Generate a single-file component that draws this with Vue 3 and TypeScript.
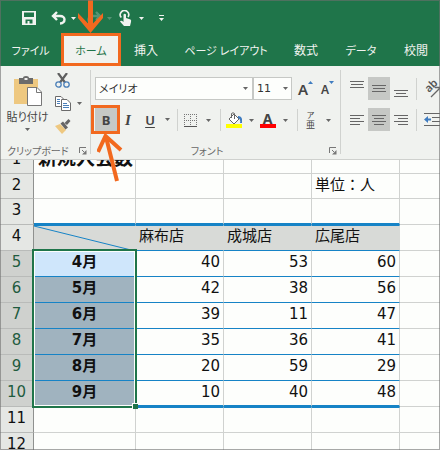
<script setup lang="ts">
import { ref } from 'vue'

interface Row {
  n: number
  label?: string
  cells: (string | number)[]
}

const tabs = ['ファイル', 'ホーム', '挿入', 'ページ レイアウト', '数式', 'データ', '校閲']
const activeTab = ref('ホーム')
const fontName = ref('メイリオ')
const fontSize = ref('11')

const rows: Row[] = [
  { n: 1, label: '新規入会数', cells: ['', '', ''] },
  { n: 2, cells: ['', '', '単位：人'] },
  { n: 3, cells: ['', '', ''] },
  { n: 4, cells: ['麻布店', '成城店', '広尾店'] },
  { n: 5, label: '4月', cells: [40, 53, 60] },
  { n: 6, label: '5月', cells: [42, 38, 56] },
  { n: 7, label: '6月', cells: [39, 11, 47] },
  { n: 8, label: '7月', cells: [35, 36, 41] },
  { n: 9, label: '8月', cells: [20, 59, 29] },
  { n: 10, label: '9月', cells: [10, 40, 48] },
  { n: 11, cells: ['', '', ''] },
  { n: 12, cells: ['', '', ''] },
]

const selected = (n: number) => n >= 5 && n <= 10
const isKana = (text: string) => /^[ァ-ー ]+$/.test(text)
</script>

<template>
  <div class="window">
    <header class="top">
      <div class="quick">
        <button class="q save" aria-label="上書き保存">
          <svg width="14" height="14" viewBox="0 0 14 14"><path d="M0 0H14V14H0Z M2 1.500V6H12V1.500Z M3.500 8.500V12.500H5.500V10H7.500V12.500H10.500V8.500Z" fill="#f1f3f0" fill-rule="evenodd" /></svg>
        </button>
        <button class="q undo" aria-label="元に戻す">
          <svg width="15" height="14" viewBox="0 0 15 14"><path d="M6 1L2 5L6 9M2 5H9C15 5 15 12 9 12.500" fill="none" stroke="#f1f3f0" stroke-width="2.400" /></svg>
          <svg class="caret" width="5" height="3" viewBox="0 0 5 3"><path d="M0 0H5L2.500 3Z" /></svg>
        </button>
        <button class="q redo" aria-label="やり直し">
          <svg width="15" height="14" viewBox="0 0 15 14"><path d="M9 1L13 5L9 9M13 5H6C0 5 0 12 6 12.500" fill="none" stroke="#f1f3f0" stroke-width="2.400" /></svg>
          <svg class="caret" width="5" height="3" viewBox="0 0 5 3"><path d="M0 0H5L2.500 3Z" /></svg>
        </button>
        <button class="q touch" aria-label="タッチ/マウス モードの切り替え">
          <svg width="13" height="17" viewBox="0 0 13 17"><path d="M2.300 7.500A4.200 4.200 0 1 1 9 7" fill="none" stroke="#f1f3f0" stroke-width="1.600" /><path d="M4.500 4.500Q5.700 3 7 4.500V8L11.500 9.500Q12.500 10 12 12L11 16H5L1 11.500Q2 10 4.500 12Z" fill="#f1f3f0" /></svg>
          <svg class="caret" width="5" height="3" viewBox="0 0 5 3"><path d="M0 0H5L2.500 3Z" /></svg>
        </button>
        <button class="q" aria-label="クイック アクセス ツール バーのユーザー設定">
          <svg width="5" height="7" viewBox="0 0 5 7"><path d="M0 0H5V1H0ZM0 3H5L2.500 6Z" fill="#f1f3f0" /></svg>
        </button>
      </div>
      <nav class="tabs">
        <button v-for="t in tabs" :key="t" class="tab" :class="{ active: t === activeTab, kana: isKana(t) }" @click="activeTab = t">{{ t }}</button>
      </nav>
    </header>

    <section class="ribbon">
      <div class="group clipboard">
        <div class="clip-body">
          <button class="paste">
            <svg width="28" height="30" viewBox="0 0 28 30">
              <rect y="3" width="24" height="25" fill="#eec880" />
              <path d="M5 2H9Q9 0 12 0T15 2H19V8H5Z" fill="#6b6b6b" /><rect x="10.500" y="2" width="3" height="2" fill="#f0f0ee" />
              <path d="M13.500 11.500H23L27.500 16V29.500H13.500Z" fill="#fff" stroke="#777" /><path d="M22.500 11.500V16.500H27.500" fill="none" stroke="#777" />
            </svg>
            <span>貼り付け</span>
            <svg class="caret" width="5" height="3" viewBox="0 0 5 3"><path d="M0 0H5L2.500 3Z" /></svg>
          </button>
          <div class="clip-tools">
            <button class="ic" aria-label="切り取り">
              <svg width="15" height="15" viewBox="0 0 15 15"><path d="M3 0L10 9.500M12 0L5 9.500" stroke="#5f5f5f" stroke-width="2.200" /><g fill="none" stroke="#4a7fb8" stroke-width="1.300"><circle cx="3.500" cy="11.500" r="2.700" /><circle cx="11.500" cy="11.500" r="2.700" /></g></svg>
            </button>
            <button class="ic copy" aria-label="コピー">
              <svg width="16" height="15" viewBox="0 0 16 15"><g fill="#fff" stroke="#6b6b6b"><path d="M.5.5H6L8.500 3V10.500H.5Z" /><path d="M6.500 3.500H12L15.500 7V14.500H6.500Z" /></g><path d="M2 3.500H5M2 5.500H5M2 7.500H5M8 7.500H12M8 9.500H14M8 11.500H14" stroke="#4a7fb8" /></svg>
              <svg class="caret" width="5" height="3" viewBox="0 0 5 3"><path d="M0 0H5L2.500 3Z" /></svg>
            </button>
            <button class="ic" aria-label="書式のコピー/貼り付け">
              <svg width="16" height="15" viewBox="0 0 16 15"><path d="M0 7L5 5L11 11L7 15Z" fill="#eec880" /><path d="M5.500 4.500L8 2.500L13 8.500L10.500 10.500ZM9.500 4L13.500 0L15.500 2L12 6Z" fill="#666" /></svg>
            </button>
          </div>
        </div>
        <footer><span>クリップボード</span>
          <button class="launch" aria-label="クリップボードの詳細"><svg width="8" height="8" viewBox="0 0 8 8"><path d="M.5 6V.5H7M3 3L5 5" fill="none" stroke="#777" /><path d="M7.500 3V7.500H3Z" fill="#777" /></svg></button>
        </footer>
      </div>

      <div class="group font">
        <div class="line">
          <span class="select name"><select v-model="fontName" aria-label="フォント名"><option>メイリオ</option></select><svg class="caret" width="5" height="3" viewBox="0 0 5 3"><path d="M0 0H5L2.500 3Z" /></svg></span>
          <span class="select size"><select v-model="fontSize" aria-label="フォント サイズ"><option>11</option></select><svg class="caret" width="5" height="3" viewBox="0 0 5 3"><path d="M0 0H5L2.500 3Z" /></svg></span>
          <button class="grow" aria-label="フォント サイズの拡大"><span>A</span><svg width="5" height="3" viewBox="0 0 5 3"><path d="M0 3H5L2.500 0Z" fill="#3f7cc0" /></svg></button>
          <button class="grow small" aria-label="フォント サイズの縮小"><span>A</span><svg width="5" height="3" viewBox="0 0 5 3"><path d="M0 0H5L2.500 3Z" fill="#3f7cc0" /></svg></button>
        </div>
        <div class="line">
          <button class="letter bold" aria-label="太字">B</button>
          <button class="letter italic" aria-label="斜体">I</button>
          <button class="letter under" aria-label="下線">U</button>
          <button class="drop" aria-label="下線の種類"><svg class="caret" width="5" height="3" viewBox="0 0 5 3"><path d="M0 0H5L2.500 3Z" /></svg></button>
          <i class="sep"></i>
          <button class="tool" aria-label="罫線">
            <svg width="16" height="16" viewBox="0 0 16 16"><path d="M1 2.500H15M1 8.500H15M1.500 2V14M7.500 2V14M13.500 2V14" stroke="#777" stroke-dasharray="1 1" /><path d="M1 14.500H14" stroke="#555" /></svg>
            <svg class="caret" width="5" height="3" viewBox="0 0 5 3"><path d="M0 0H5L2.500 3Z" /></svg>
          </button>
          <i class="sep"></i>
          <button class="tool" aria-label="塗りつぶしの色">
            <svg width="16" height="16" viewBox="0 0 16 16"><path d="M3 7L8 2L13 7L8 12Z" fill="#fff" stroke="#666" /><path d="M5.500 6V1.500Q7 0 8.500 1.500V7" fill="none" stroke="#666" /><path d="M12 4Q17 4 16 11H14Q15 7 12 6Z" fill="#3f7cc0" /><path d="M0 12H16V16H0Z" fill="#ff0" /></svg>
            <svg class="caret" width="5" height="3" viewBox="0 0 5 3"><path d="M0 0H5L2.500 3Z" /></svg>
          </button>
          <button class="tool" aria-label="フォントの色">
            <span class="color-a">A</span>
            <svg class="caret" width="5" height="3" viewBox="0 0 5 3"><path d="M0 0H5L2.500 3Z" /></svg>
          </button>
          <i class="sep"></i>
          <button class="tool ruby" aria-label="ふりがなの表示">
            <span><small>ア</small>亜</span>
            <svg class="caret" width="5" height="3" viewBox="0 0 5 3"><path d="M0 0H5L2.500 3Z" /></svg>
          </button>
        </div>
        <footer><span>フォント</span>
          <button class="launch" aria-label="フォントの詳細"><svg width="8" height="8" viewBox="0 0 8 8"><path d="M.5 6V.5H7M3 3L5 5" fill="none" stroke="#777" /><path d="M7.500 3V7.500H3Z" fill="#777" /></svg></button>
        </footer>
      </div>

      <div class="group align">
        <div class="line">
          <button class="al" aria-label="上揃え"><svg width="14" height="22" viewBox="0 0 14 22"><path d="M0 3.500H14M1 6.500H13M0 9.500H14" /></svg></button>
          <button class="al on" aria-label="上下中央揃え"><svg width="14" height="22" viewBox="0 0 14 22"><path d="M0 7.500H14M1 10.500H13M0 13.500H14" /></svg></button>
          <button class="al" aria-label="下揃え"><svg width="14" height="22" viewBox="0 0 14 22"><path d="M0 12.500H14M2 15.500H12M0 18.500H14" /></svg></button>
          <i class="sep"></i>
          <button class="edge" aria-label="方向"><svg width="17" height="18" viewBox="0 0 17 18"><text transform="translate(5 13) rotate(-45)" font-family="Noto Sans" font-size="11" font-weight="600" fill="#555">ab</text><path d="M7 17L16 8M11 7.500H16.500V13" fill="none" stroke="#666" stroke-width="1.300" /></svg></button>
        </div>
        <div class="line">
          <button class="al" aria-label="左揃え"><svg width="14" height="22" viewBox="0 0 14 22"><path d="M0 6.500H14M0 9.500H10M0 12.500H14M0 15.500H10" /></svg></button>
          <button class="al on" aria-label="中央揃え"><svg width="14" height="22" viewBox="0 0 14 22"><path d="M0 6.500H14M2 9.500H12M0 12.500H14M2 15.500H12" /></svg></button>
          <button class="al" aria-label="右揃え"><svg width="14" height="22" viewBox="0 0 14 22"><path d="M0 6.500H14M4 9.500H14M0 12.500H14M4 15.500H14" /></svg></button>
          <i class="sep"></i>
          <button class="edge" aria-label="インデントを減らす"><svg width="17" height="18" viewBox="0 0 17 18"><path d="M0 2.500H17M8 6.500H17M8 10.500H17M0 14.500H17" stroke="#666" /><path d="M0 8.500L4 5V7.500H7V9.500H4V12Z" fill="#3f7cc0" /></svg></button>
        </div>
      </div>
    </section>

    <main class="sheet">
      <table>
        <colgroup><col class="c-head" /><col class="c-label" /><col class="c-val" /><col class="c-val" /><col class="c-val" /><col /></colgroup>
        <tbody>
          <tr v-for="r in rows" :key="r.n" :class="['r' + r.n, { sel: selected(r.n) }]">
            <th scope="row">{{ r.n }}</th>
            <td class="label">
              <svg v-if="r.n === 4" width="96" height="24" viewBox="0 0 96 24"><path d="M0 0L95 23.500" stroke="#1683c6" fill="none" /></svg>
              <template v-else>{{ r.label }}</template>
            </td>
            <td v-for="(c, i) in r.cells" :key="i" :class="{ num: typeof c === 'number' }">{{ c }}</td>
            <td class="rest"></td>
          </tr>
        </tbody>
      </table>
      <div class="range"><i></i></div>
    </main>

    <div class="tab-mark"></div>
    <div class="bold-mark"></div>
    <svg class="arrow-tab" width="26" height="33" viewBox="0 0 26 33"><path d="M12.500 0V28" stroke="#f2691f" stroke-width="5" /><path d="M0 13L12.500 26L25 13L25 18L12.500 33L0 18Z" fill="#f2691f" /></svg>
    <svg class="arrow-bold" width="28" height="50" viewBox="0 0 28 50"><path d="M9 4L20 48" stroke="#f2691f" stroke-width="4" /><path d="M1 19L8.500 3L24 17" fill="none" stroke="#f2691f" stroke-width="4" /></svg>
  </div>
</template>

<style>
body { margin: 0; }
</style>

<style scoped>
* { box-sizing: border-box; }
.window { position: relative; height: 100vh; min-height: 200px; overflow: hidden; display: flex; flex-direction: column; background: #fdfefc; font-family: "Noto Sans", "Noto Sans CJK JP", sans-serif; font-size: 12px; color: #444; }
.window::after { content: ""; position: absolute; inset: 0; border: 1px solid rgba(110, 110, 110, .6); pointer-events: none; }
button { border: 0; padding: 0; margin: 0; background: none; font: inherit; color: inherit; display: flex; align-items: center; flex: none; }
svg { display: block; flex: none; }
.caret { fill: #666; }
.top { background: #1f754a; color: #f1f3f0; flex: none; }
.quick { height: 34px; padding: 2px 0 0 22px; display: flex; align-items: center; }
.quick .caret { fill: #f1f3f0; }
.q { gap: 5px; }
.save { margin-right: 15px; }
.undo { margin-right: 11px; }
.redo { margin-right: 7px; opacity: .25; }
.touch { gap: 7px; margin-right: 15px; }
.tabs { display: flex; height: 32px; font-feature-settings: "palt"; }
.tab { height: 32px; padding: 0; justify-content: center; white-space: nowrap; }
.kana { font-size: 11px; }
.tab:first-child { width: 61px; }
.tab:nth-child(2) { width: 60px; }
.tab:nth-child(3) { width: 50px; }
.tab:nth-child(4) { width: 110px; }
.tab:nth-child(5) { width: 50px; }
.tab:nth-child(6) { width: 60px; }
.tab:nth-child(7) { width: 50px; }
.active { background: #f0f2ef; color: #1f754a; }

.ribbon { display: flex; flex: none; height: 94px; background: #f0f2ef; border-bottom: 1px solid #cfd1ce; }
.group { position: relative; padding-top: 11px; display: flex; flex-direction: column; flex: none; }
.group:not(.align)::after { content: ""; position: absolute; right: 0; top: 4px; height: 84px; width: 1px; background: #d0d2cf; }
.clipboard { width: 91px; padding-left: 7px; padding-top: 7px; }
.font { width: 250px; padding-left: 4px; }
.align { flex: 1; min-width: 0; overflow: hidden; padding-left: 5px; }
.group footer { display: flex; align-items: center; margin-top: auto; height: 18px; color: #686868; font-size: 10px; font-feature-settings: "palt"; }
.clipboard footer { justify-content: space-between; padding-right: 4px; white-space: nowrap; }
.font footer { position: relative; justify-content: center; padding-right: 22px; }
.font .launch { position: absolute; right: 4px; }
.launch { margin-top: 2px; }
.clip-body { display: flex; gap: 7px; }
.paste { flex-direction: column; width: 41px; padding-top: 3px; white-space: nowrap; font-feature-settings: "palt"; }
.paste span { line-height: 22px; font-size: 11px; }
.clip-tools { display: flex; flex-direction: column; gap: 8px; }
.ic { height: 15px; gap: 6px; }
.line { display: flex; align-items: center; height: 23px; }
.line + .line { margin-top: 8px; }
.select { position: relative; height: 23px; border: 1px solid #c6c8c5; background: #fdfefc; display: flex; align-items: center; }
.select select { appearance: none; border: 0; outline: 0; background: none; width: 100%; height: 21px; padding: 0 3px; font: inherit; color: #333; }
.select .caret { position: absolute; right: 4px; pointer-events: none; }
.name { width: 158px; font-size: 11px; font-feature-settings: "palt"; }
.name select { font-feature-settings: inherit; }
.size { width: 39px; font-family: "DejaVu Sans", sans-serif; font-size: 11px; }
.size .caret { right: 3px; }
.grow { position: relative; width: 23px; height: 23px; padding-left: 6px; align-items: flex-start; }
.grow span { font-size: 15px; line-height: 24px; font-weight: 600; }
.grow svg { margin-top: 4px; }
.small span { font-size: 12px; line-height: 26px; }
.letter { width: 22px; height: 23px; justify-content: center; font-size: 13px; font-weight: 700; line-height: 20px; }
.bold { background: #c6c8c5; }
.italic { font-family: "Liberation Serif", serif; font-style: italic; font-size: 15px; }
.under { font-weight: 600; text-decoration: underline; text-underline-offset: 2px; }
.drop { width: 16px; padding-left: 4px; }
.sep { width: 1px; height: 22px; background: #d0d2cf; margin: 0 1px 0 0; flex: none; }
.tool { width: 34px; height: 23px; padding-left: 1px; gap: 7px; justify-content: center; }
.tool + .sep { margin-left: 7px; }
.tool .caret { margin-top: 2px; }
.color-a { width: 16px; height: 16px; border-bottom: 4px solid #f00; text-align: center; font-size: 14px; line-height: 13px; font-weight: 700; }
.ruby span { display: flex; flex-direction: column; align-items: center; font-size: 9px; line-height: 10px; width: 16px; }
.ruby small { font-size: 8px; line-height: 10px; }
.al { width: 22px; height: 23px; justify-content: center; stroke: #666; }
.on { background: #c6c8c5; }
.align .sep { margin: 0 7px 0 4px; }

.sheet { position: relative; flex: 1; min-height: 0; overflow: hidden; font-family: "DejaVu Sans", "Noto Sans CJK JP", sans-serif; font-size: 15px; color: #111; }
table { width: 100%; table-layout: fixed; border-collapse: separate; border-spacing: 0; margin-top: -12px; }
.c-head { width: 34px; }
.c-label { width: 102px; }
.c-val { width: 88px; }
tr { height: 26px; }
.r2 { height: 25px; }
th, td { height: inherit; padding: 0 3px; border-right: 1px solid #d0d2d0; border-bottom: 1px solid #d0d2d0; line-height: 22px; white-space: nowrap; text-align: left; vertical-align: top; }
th { padding: 0; font-weight: 400; text-align: center; background: #e5e7e4; border-color: #b9bbb9 #8f918f #b9bbb9 #b9bbb9; }
.sel th { background: #cfd1ce; color: #1f5c3f; }
.num { text-align: right; }
.rest { border-right: 0; }
.label { font-weight: 700; }
.r1 .label { font-size: 19px; line-height: 20px; padding-left: 4px; overflow: visible; }
.r3 td:not(.rest) { border-bottom: 2px solid #1683c6; }
.r4 td:not(.rest) { border-top: 1px solid #1683c6; border-right-color: #d8dad7; border-bottom-color: #1683c6; background: #d8dad7; line-height: 20px; }
.r4 .label { padding: 0; }
.sel td:not(.rest) { border-bottom-color: #1683c6; }
.sel .label { background: #a0b3bf; text-align: center; }
.r5 .label { background: #cfe6fb; }
.r10 td:not(.rest) { border-bottom-width: 2px; }
.r11 td:not(.rest) { border-top: 1px solid #1683c6; }
.range { position: absolute; left: 32px; top: 89px; width: 105px; height: 159px; border: 2px solid #1f754a; box-shadow: inset 0 0 0 1px #fdfefc; pointer-events: none; }
.range i { position: absolute; right: -3px; bottom: -3px; width: 6px; height: 6px; background: #1f754a; border: 1px solid #fdfefc; border-right: 0; border-bottom: 0; }

.tab-mark, .bold-mark { position: absolute; border: 3px solid #f2691f; pointer-events: none; }
.tab-mark { left: 61px; top: 33px; width: 60px; height: 33px; }
.bold-mark { left: 91px; top: 105px; width: 29px; height: 29px; }
.arrow-tab, .arrow-bold { position: absolute; pointer-events: none; }
.arrow-tab { left: 78px; top: 0; }
.arrow-bold { left: 97px; top: 133px; }
</style>
